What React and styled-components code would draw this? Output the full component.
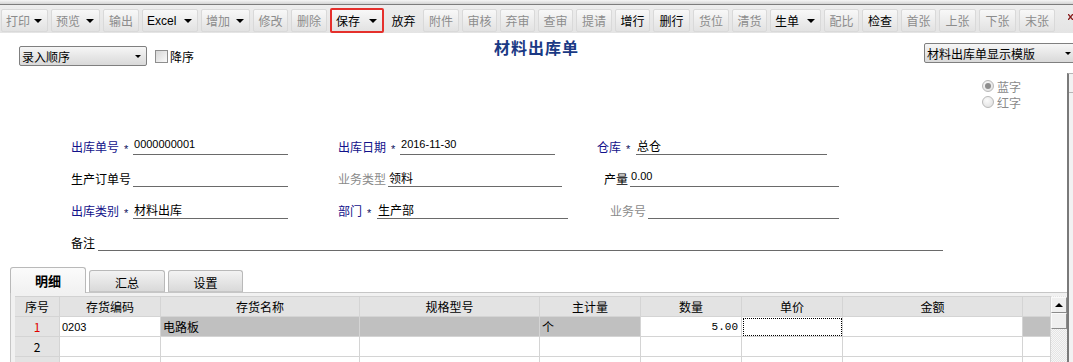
import React from 'react';
import styled, { createGlobalStyle } from 'styled-components';

const GlobalStyle = createGlobalStyle`
  html, body {
    margin: 0;
    padding: 0;
    background: #fff;
  }
  body {
    font-family: "Noto Sans CJK SC", "Liberation Sans", sans-serif;
    font-size: 12px;
    color: #000;
    overflow: hidden;
  }
`;

const Page = styled.div`
  position: relative;
  width: 1073px;
  height: 362px;
  overflow: hidden;
  background: #fff;
`;

// ---------- toolbar ----------
const TopStrip = styled.div`
  height: 4px;
  background: linear-gradient(#f6f6f6, #d4d4d4);
  border-bottom: 1px solid #7c7c7c;
`;

const Toolbar = styled.div`
  box-sizing: border-box;
  display: flex;
  align-items: flex-start;
  gap: 3px;
  height: 28px;
  padding: 4px 0 0 1px;
  background: linear-gradient(#ededed, #e4e4e4);
`;

const ToolButton = styled.div`
  box-sizing: border-box;
  flex-shrink: 0;
  width: ${p => p.$w}px;
  height: ${p => (p.$active ? 25 : 23)}px;
  margin-top: ${p => (p.$active ? -1 : 0)}px;
  display: flex;
  align-items: center;
  justify-content: ${p => (p.$drop ? 'space-between' : 'center')};
  padding: ${p => (p.$drop ? '0 5px 0 4px' : '0')};
  border-radius: 2px;
  border: ${p => (p.$active ? '2px solid #e5302c' : p.$flat ? '1px solid transparent' : '1px solid #d9d9d9')};
  background: ${p => (p.$flat ? 'transparent' : 'linear-gradient(#f8f8f8, #e2e2e2)')};
  color: ${p => (p.$off ? '#8c8c8c' : '#000')};
  font-family: ${p => (p.$latin ? '"Liberation Sans", sans-serif' : '"Noto Sans CJK SC", sans-serif')};
  font-size: 12px;
  white-space: nowrap;
`;

const Caret = styled.span`
  width: 0;
  height: 0;
  border-left: ${p => p.$size || 4}px solid transparent;
  border-right: ${p => p.$size || 4}px solid transparent;
  border-top: ${p => p.$size || 4}px solid #000;
`;

const EdgeMark = styled.svg`
  margin-left: auto;
  margin-top: 5px;
  flex-shrink: 0;
`;

// ---------- header ----------
const Header = styled.div`
  display: grid;
  grid-template-columns: 1fr auto 1fr;
  height: 79px;
`;

const LeftGroup = styled.div`
  display: flex;
  align-items: center;
  align-self: start;
  padding: 13px 0 0 19px;
`;

const SelectBox = styled.div`
  box-sizing: border-box;
  flex-shrink: 0;
  width: ${p => p.$w}px;
  height: 20px;
  display: flex;
  align-items: center;
  justify-content: space-between;
  padding: 0 5px 0 2px;
  border: 1px solid #7f7f7f;
  border-radius: 2px;
  background: linear-gradient(#f6f6f6, #d9d9d9);
  font-size: 12px;
  white-space: nowrap;
`;

const CheckBox = styled.span`
  box-sizing: border-box;
  width: 13px;
  height: 13px;
  margin-left: 8px;
  border: 1px solid #8e8e8e;
  background: linear-gradient(135deg, #d6d6d6, #fafafa);
`;

const CheckLabel = styled.span`
  margin-left: 2px;
  font-size: 12px;
`;

const Title = styled.div`
  padding-top: 4px;
  font-size: 16px;
  line-height: 20px;
  font-weight: 700;
  letter-spacing: 1px;
  color: #1a3984;
`;

const RightGroup = styled.div`
  justify-self: end;
  width: 149px;
  padding-top: 10px;
`;

const RadioGroup = styled.div`
  display: flex;
  flex-direction: column;
  margin: 15px 0 0 58px;
`;

const RadioRow = styled.div`
  display: flex;
  align-items: center;
  gap: 3px;
  height: 16px;
  color: #8a8a8a;
  font-size: 12px;
`;

const Radio = styled.span`
  box-sizing: border-box;
  position: relative;
  width: 12px;
  height: 12px;
  border-radius: 50%;
  border: 1px solid #b9b9b9;
  background: radial-gradient(circle at 40% 35%, #fbfbfb, #dcdcdc);

  &::after {
    content: '';
    display: ${p => (p.$on ? 'block' : 'none')};
    position: absolute;
    left: 2px;
    top: 2px;
    width: 6px;
    height: 6px;
    border-radius: 50%;
    background: #8d8d8d;
  }
`;

// ---------- form ----------
const Form = styled.div`
  display: grid;
  grid-template-columns: 267px 259px 1fr;
  grid-auto-rows: 18px;
  row-gap: 14px;
  padding: 25px 0 0 71px;
`;

const Field = styled.div`
  display: flex;
  align-items: flex-end;
  margin-left: ${p => p.$indent || 0}px;
  grid-column: ${p => (p.$wide ? '1 / -1' : 'auto')};
`;

const labelTones = { blue: '#12128a', gray: '#8a8a8a', black: '#000' };

const Label = styled.span`
  font-size: 12px;
  line-height: 14px;
  padding-bottom: 1px;
  white-space: nowrap;
  color: ${p => labelTones[p.$tone || 'black']};
`;

const Star = styled.span`
  width: 14px;
  text-align: center;
  font-family: "Liberation Sans", sans-serif;
  font-size: 11px;
  line-height: 11px;
  color: #0c0c5c;
`;

const Value = styled.div`
  box-sizing: border-box;
  display: flex;
  align-items: ${p => (p.$num ? 'flex-start' : 'flex-end')};
  width: ${p => p.$w}px;
  height: 17px;
  margin-left: ${p => p.$gap ?? 2}px;
  padding: ${p => (p.$num ? '0 0 0 1px' : '0 0 1px 1px')};
  border-bottom: 1px solid #6a6a6a;
  font-family: ${p => (p.$num ? '"Liberation Sans", sans-serif' : '"Noto Sans CJK SC", sans-serif')};
  font-size: ${p => (p.$num ? 11 : 12)}px;
  line-height: ${p => (p.$num ? 12 : 14)}px;
  white-space: nowrap;
`;

// ---------- tabs + grid ----------
const TabStrip = styled.div`
  display: flex;
  align-items: flex-end;
  gap: 3px;
  height: 25px;
  margin: 16px 0 0 10px;
  position: relative;
  z-index: 1;
`;

const Tab = styled.div`
  box-sizing: border-box;
  width: ${p => p.$w}px;
  height: ${p => (p.$active ? 26 : 22)}px;
  margin-bottom: ${p => (p.$active ? -1 : 0)}px;
  display: flex;
  align-items: center;
  justify-content: center;
  padding-top: ${p => (p.$active ? 0 : 2)}px;
  border: 1px solid #b9b9b9;
  border-bottom: ${p => (p.$active ? 'none' : '1px solid #c6c6c6')};
  border-radius: 3px 3px 0 0;
  background: ${p => (p.$active ? 'linear-gradient(#fbfbfb, #f1f1f1)' : 'linear-gradient(#f3f3f3, #d9d9d9)')};
  font-size: ${p => (p.$active ? 13 : 12)}px;
  font-weight: ${p => (p.$active ? 700 : 400)};
`;

const Panel = styled.div`
  box-sizing: border-box;
  display: flex;
  align-items: flex-start;
  width: 1057px;
  height: 80px;
  margin-left: 10px;
  padding: 3px 0 0 4px;
  border-top: 1px solid #c6c6c6;
  border-left: 1px solid #c6c6c6;
  background: #f1f1f1;
`;

const Grid = styled.div`
  display: grid;
  grid-template-columns: 45px 101px 199px 180px 101px 101px 101px 180px 28px;
  grid-auto-rows: 20px;
  width: 1036px;
  border-top: 1px solid #d2d2d2;
`;

const cellBg = { head: '#e3e3e3', gray: '#c0c0c0', white: '#fff' };

const Cell = styled.div`
  box-sizing: border-box;
  display: flex;
  align-items: center;
  justify-content: ${p => p.$align || 'flex-start'};
  padding: 0 ${p => (p.$align === 'flex-end' ? 3 : 2)}px 0 2px;
  border-right: 1px solid #d4d4d4;
  border-bottom: 1px solid #d4d4d4;
  background: ${p => cellBg[p.$bg || 'white']};
  color: ${p => p.$color || '#000'};
  font-family: ${p =>
    p.$mono ? '"Liberation Mono", monospace' : p.$num ? '"Liberation Sans", sans-serif' : '"Noto Sans CJK SC", sans-serif'};
  font-size: ${p => (p.$num || p.$mono ? 11 : 12)}px;
  white-space: nowrap;
  outline: ${p => (p.$focus ? '1px dotted #000' : 'none')};
  outline-offset: -2px;
`;

const ScrollBar = styled.div`
  box-sizing: border-box;
  display: flex;
  flex-direction: column;
  width: 16px;
  height: 100%;
  padding-top: 1px;
  background: repeating-conic-gradient(#f6f6f6 0 25%, #e4e4e4 0 50%) 0 0 / 2px 2px;
`;

const ScrollBtn = styled.div`
  box-sizing: border-box;
  display: flex;
  align-items: center;
  justify-content: center;
  height: 16px;
  border: 1px solid;
  border-color: #fafafa #8a8a8a #8a8a8a #fafafa;
  background: #efefef;
`;

const UpCaret = styled.span`
  width: 0;
  height: 0;
  border-left: 4px solid transparent;
  border-right: 4px solid transparent;
  border-bottom: 4px solid #000;
`;

const OuterEdge = styled.div`
  position: absolute;
  left: 1067px;
  top: 73px;
  bottom: 0;
  width: 6px;
  box-sizing: border-box;
  border-left: 2px solid #7a7a7a;
  border-top: 1px solid #b5b5b5;
  background: #f2f2f2;

  &::after {
    content: '';
    position: absolute;
    left: 0;
    right: 0;
    top: 18px;
    border-top: 1px solid #b5b5b5;
  }
`;

const tools = [
  { t: '打印', w: 47, drop: true, off: true },
  { t: '预览', w: 49, drop: true, off: true },
  { t: '输出', w: 36, off: true },
  { t: 'Excel', w: 56, drop: true, latin: true },
  { t: '增加', w: 49, drop: true, off: true },
  { t: '修改', w: 35, off: true },
  { t: '删除', w: 36, off: true },
  { t: '保存', w: 54, drop: true, active: true },
  { t: '放弃', w: 33, flat: true },
  { t: '附件', w: 36, off: true },
  { t: '审核', w: 35, off: true },
  { t: '弃审', w: 35, off: true },
  { t: '查审', w: 35, off: true },
  { t: '提请', w: 36, off: true },
  { t: '增行', w: 35 },
  { t: '删行', w: 37 },
  { t: '货位', w: 36, off: true },
  { t: '清货', w: 35, off: true },
  { t: '生单', w: 51, drop: true },
  { t: '配比', w: 35, off: true },
  { t: '检查', w: 36 },
  { t: '首张', w: 35, off: true },
  { t: '上张', w: 37, off: true },
  { t: '下张', w: 37, off: true },
  { t: '末张', w: 36, off: true },
];

const columns = ['序号', '存货编码', '存货名称', '规格型号', '主计量', '数量', '单价', '金额', ''];

export default function App() {
  return (
    <Page>
      <GlobalStyle />
      <TopStrip />
      <Toolbar>
        {tools.map(b => (
          <ToolButton
            key={b.t}
            $w={b.w}
            $drop={b.drop}
            $off={b.off}
            $active={b.active}
            $flat={b.flat}
            $latin={b.latin}
          >
            <span>{b.t}</span>
            {b.drop && <Caret />}
          </ToolButton>
        ))}
        <EdgeMark width="5" height="6" viewBox="0 0 5 6">
          <path d="M0 0 L5 6 M5 0 L0 6" stroke="#8a1c1c" strokeWidth="1.4" />
        </EdgeMark>
      </Toolbar>

      <Header>
        <LeftGroup>
          <SelectBox $w={128}>
            <span>录入顺序</span>
            <Caret $size={3} />
          </SelectBox>
          <CheckBox />
          <CheckLabel>降序</CheckLabel>
        </LeftGroup>
        <Title>材料出库单</Title>
        <RightGroup>
          <SelectBox $w={153}>
            <span>材料出库单显示模版</span>
            <Caret $size={3} />
          </SelectBox>
          <RadioGroup>
            <RadioRow>
              <Radio $on />
              <span>蓝字</span>
            </RadioRow>
            <RadioRow>
              <Radio />
              <span>红字</span>
            </RadioRow>
          </RadioGroup>
        </RightGroup>
      </Header>

      <Form>
        <Field>
          <Label $tone="blue">出库单号</Label>
          <Star>*</Star>
          <Value $w={155} $gap={0} $num>0000000001</Value>
        </Field>
        <Field>
          <Label $tone="blue">出库日期</Label>
          <Star>*</Star>
          <Value $w={155} $gap={0} $num>2016-11-30</Value>
        </Field>
        <Field>
          <Label $tone="blue">仓库</Label>
          <Star>*</Star>
          <Value $w={191} $gap={1}>总仓</Value>
        </Field>

        <Field>
          <Label>生产订单号</Label>
          <Value $w={155}></Value>
        </Field>
        <Field>
          <Label $tone="gray">业务类型</Label>
          <Value $w={174}>领料</Value>
        </Field>
        <Field $indent={7}>
          <Label>产量</Label>
          <Value $w={209} $num>0.00</Value>
        </Field>

        <Field>
          <Label $tone="blue">出库类别</Label>
          <Star>*</Star>
          <Value $w={155} $gap={0}>材料出库</Value>
        </Field>
        <Field>
          <Label $tone="blue">部门</Label>
          <Star>*</Star>
          <Value $w={191} $gap={1}>生产部</Value>
        </Field>
        <Field $indent={13}>
          <Label $tone="gray">业务号</Label>
          <Value $w={191}></Value>
        </Field>

        <Field $wide>
          <Label>备注</Label>
          <Value $w={845} $gap={3}></Value>
        </Field>
      </Form>

      <TabStrip>
        <Tab $w={76} $active>明细</Tab>
        <Tab $w={76}>汇总</Tab>
        <Tab $w={75}>设置</Tab>
      </TabStrip>

      <Panel>
        <Grid>
          {columns.map((c, i) => (
            <Cell key={'h' + i} $bg="head" $align="center">{c}</Cell>
          ))}

          <Cell $bg="head" $align="center" $color="#e00000">1</Cell>
          <Cell $num>0203</Cell>
          <Cell $bg="gray">电路板</Cell>
          <Cell $bg="gray" />
          <Cell $bg="gray">个</Cell>
          <Cell $mono $align="flex-end">5.00</Cell>
          <Cell $focus />
          <Cell />
          <Cell $bg="gray" />

          <Cell $bg="head" $align="center">2</Cell>
          <Cell />
          <Cell />
          <Cell />
          <Cell />
          <Cell />
          <Cell />
          <Cell />
          <Cell />

          <Cell $bg="head" />
          <Cell />
          <Cell />
          <Cell />
          <Cell />
          <Cell />
          <Cell />
          <Cell />
          <Cell />
        </Grid>
        <ScrollBar>
          <ScrollBtn>
            <UpCaret />
          </ScrollBtn>
          <ScrollBtn />
        </ScrollBar>
      </Panel>

      <OuterEdge />
    </Page>
  );
}
